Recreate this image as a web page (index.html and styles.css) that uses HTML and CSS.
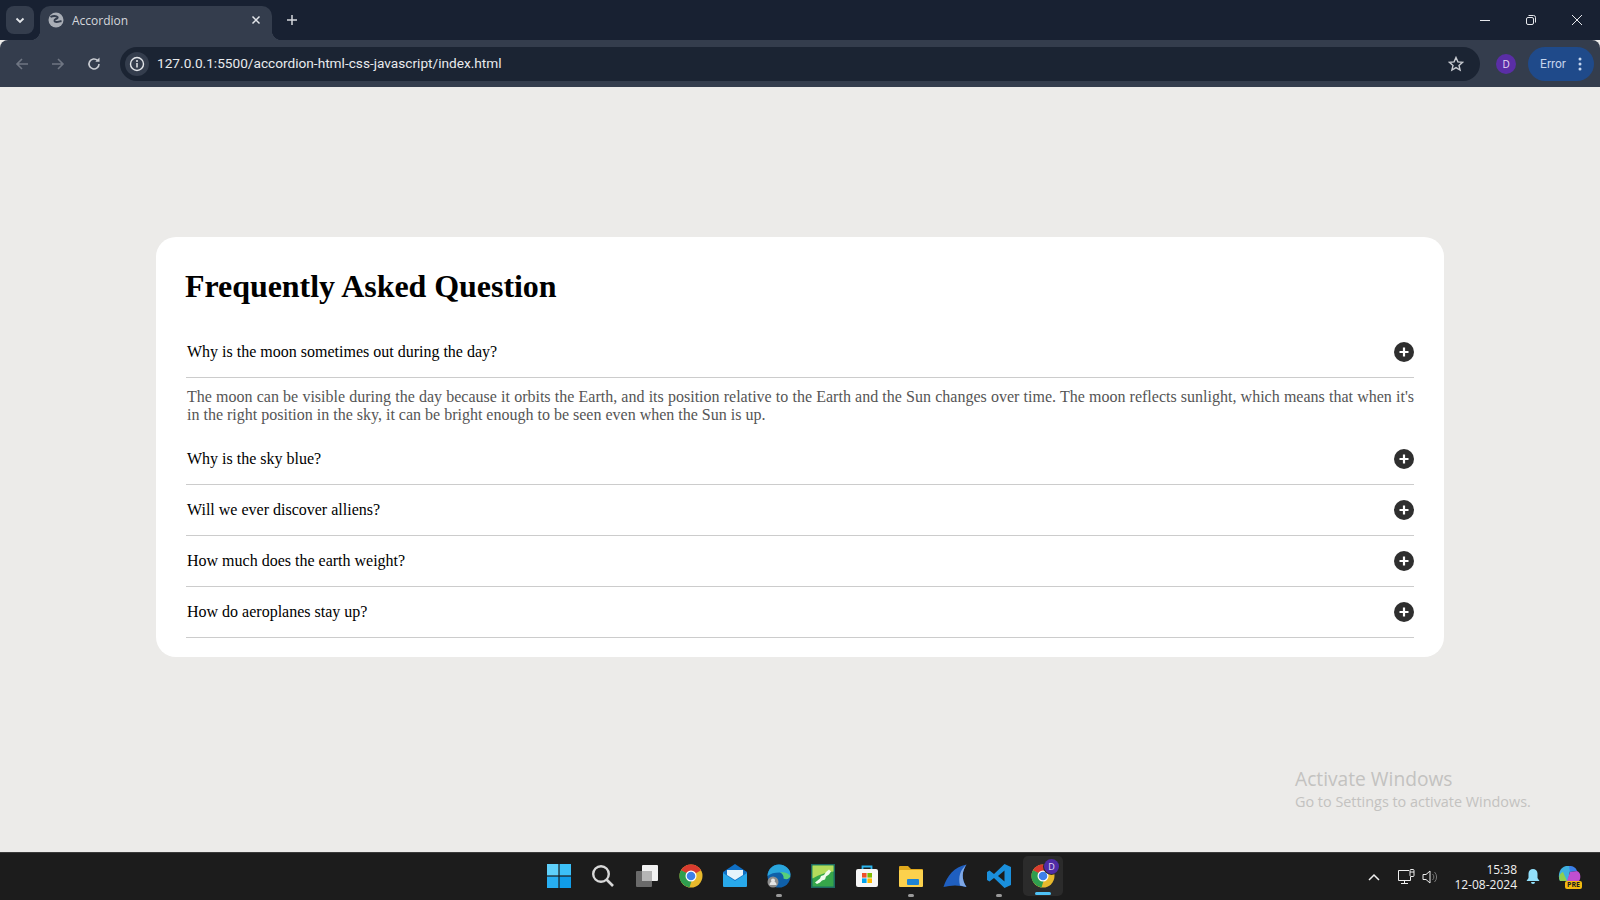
FILE: index.html
```html
<!DOCTYPE html>
<html lang="en">
<head>
    <meta charset="UTF-8">
    <title>Accordion</title>
    <link rel="stylesheet" href="styles.css">
</head>
<body>
    <div class="tabstrip">
        <div class="tab-search">
            <svg width="12" height="12" viewBox="0 0 12 12"><path d="M2.500 4.500 6 8l3.500-3.500" fill="none" stroke="#e3e6ea" stroke-width="1.800"/></svg>
        </div>
        <div class="tab">
            <svg class="globe" width="16" height="16" viewBox="0 0 16 16">
                <circle cx="8" cy="8" r="7.500" fill="#a9aeb6"/>
                <path d="M2.500 5C5 3.500 8.500 3.500 9.500 5 10.500 7 6 6.500 6.500 9 7 11 11 9.500 13.500 9" fill="none" stroke="#343d4d" stroke-width="2"/>
            </svg>
            <span class="tab-title">Accordion</span>
            <svg class="tab-close" width="10" height="10" viewBox="0 0 10 10"><path d="M1.500 1.500l7 7M8.500 1.500l-7 7" stroke="#e3e6ea" stroke-width="1.500"/></svg>
        </div>
        <svg class="new-tab" width="12" height="12" viewBox="0 0 12 12"><path d="M6 1v10M1 6h10" stroke="#d5d8dd" stroke-width="1.500"/></svg>
        <div class="window-buttons">
            <svg width="12" height="12" viewBox="0 0 12 12"><path d="M1 6.500h10" stroke="#e6e8ec" stroke-width="1"/></svg>
            <svg width="12" height="12" viewBox="0 0 12 12"><rect x="1.500" y="3.500" width="7" height="7" rx="1.500" fill="none" stroke="#e6e8ec"/><path d="M3.500 1.500h5a2 2 0 0 1 2 2v5" fill="none" stroke="#e6e8ec"/></svg>
            <svg width="12" height="12" viewBox="0 0 12 12"><path d="M1 1l10 10M11 1 1 11" stroke="#e6e8ec" stroke-width="1"/></svg>
        </div>
    </div>

    <div class="toolbar">
        <div class="nav-buttons">
            <svg width="16" height="16" viewBox="0 0 16 16"><path d="M14 8H3M8 3 3 8l5 5" fill="none" stroke="#6f7683" stroke-width="1.600"/></svg>
            <svg width="16" height="16" viewBox="0 0 16 16"><path d="M2 8h11M8 3l5 5-5 5" fill="none" stroke="#6f7683" stroke-width="1.600"/></svg>
            <svg width="16" height="16" viewBox="0 0 16 16"><path d="M13 8a5 5 0 1 1-1.500-3.600" fill="none" stroke="#c9ccd2" stroke-width="1.600"/><path d="M13.500 1.500v4.200H9.300z" fill="#c9ccd2"/></svg>
        </div>
        <div class="omnibox">
            <div class="site-info">
                <svg width="16" height="16" viewBox="0 0 16 16"><circle cx="8" cy="8" r="6.500" fill="none" stroke="#e3e6ea" stroke-width="1.400"/><path d="M8 7v4.500" stroke="#e3e6ea" stroke-width="1.500"/><circle cx="8" cy="4.900" r="1" fill="#e3e6ea"/></svg>
            </div>
            <span class="url">127.0.0.1:5500/accordion-html-css-javascript/index.html</span>
            <svg class="star" width="16" height="16" viewBox="0 0 16 16"><path d="M8 1.500l1.900 4.400 4.700.4-3.600 3.100 1.100 4.700L8 11.600l-4.100 2.500L5 9.400 1.400 6.300l4.700-.4z" fill="none" stroke="#c9ccd2" stroke-width="1.400"/></svg>
        </div>
        <div class="avatar">D</div>
        <div class="error-pill">
            <span>Error</span>
            <svg width="4" height="14" viewBox="0 0 4 14"><circle cx="2" cy="2" r="1.500" fill="#c5d5ee"/><circle cx="2" cy="7" r="1.500" fill="#c5d5ee"/><circle cx="2" cy="12" r="1.500" fill="#c5d5ee"/></svg>
        </div>
    </div>

    <main class="page">
        <div class="card">
            <h1>Frequently Asked Question</h1>

            <div class="faq-item">
                <div class="question">
                    <span>Why is the moon sometimes out during the day?</span>
                    <svg class="plus" width="20" height="20" viewBox="0 0 20 20"><circle cx="10" cy="10" r="10" fill="#2f2f2f"/><path d="M10 5.500v9M5.500 10h9" stroke="#fff" stroke-width="2.200"/></svg>
                </div>
                <p class="answer">The moon can be visible during the day because it orbits the Earth, and its position relative to the Earth and the Sun changes over time. The moon reflects sunlight, which means that when it's in the right position in the sky, it can be bright enough to be seen even when the Sun is up.</p>
            </div>
            <div class="faq-item">
                <div class="question">
                    <span>Why is the sky blue?</span>
                    <svg class="plus" width="20" height="20" viewBox="0 0 20 20"><circle cx="10" cy="10" r="10" fill="#2f2f2f"/><path d="M10 5.500v9M5.500 10h9" stroke="#fff" stroke-width="2.200"/></svg>
                </div>
            </div>
            <div class="faq-item">
                <div class="question">
                    <span>Will we ever discover alliens?</span>
                    <svg class="plus" width="20" height="20" viewBox="0 0 20 20"><circle cx="10" cy="10" r="10" fill="#2f2f2f"/><path d="M10 5.500v9M5.500 10h9" stroke="#fff" stroke-width="2.200"/></svg>
                </div>
            </div>
            <div class="faq-item">
                <div class="question">
                    <span>How much does the earth weight?</span>
                    <svg class="plus" width="20" height="20" viewBox="0 0 20 20"><circle cx="10" cy="10" r="10" fill="#2f2f2f"/><path d="M10 5.500v9M5.500 10h9" stroke="#fff" stroke-width="2.200"/></svg>
                </div>
            </div>
            <div class="faq-item">
                <div class="question">
                    <span>How do aeroplanes stay up?</span>
                    <svg class="plus" width="20" height="20" viewBox="0 0 20 20"><circle cx="10" cy="10" r="10" fill="#2f2f2f"/><path d="M10 5.500v9M5.500 10h9" stroke="#fff" stroke-width="2.200"/></svg>
                </div>
            </div>
        </div>

        <div class="watermark">
            <div class="watermark-title">Activate Windows</div>
            <div>Go to Settings to activate Windows.</div>
        </div>
    </main>

    <footer class="taskbar">
        <div class="task-icons">
            <div class="task-icon">
                <svg width="24" height="24" viewBox="0 0 24 24"><rect width="11.400" height="11.400" fill="#5fd0fb"/><rect x="12.600" width="11.400" height="11.400" fill="#3cc0f8"/><rect y="12.600" width="11.400" height="11.400" fill="#27aef2"/><rect x="12.600" y="12.600" width="11.400" height="11.400" fill="#109ce8"/></svg>
            </div>
            <div class="task-icon">
                <svg width="24" height="24" viewBox="0 0 24 24"><circle cx="10" cy="10" r="7.800" fill="none" stroke="#d8d8d8" stroke-width="2.400"/><path d="M15.500 15.500 22 22" stroke="#d8d8d8" stroke-width="2.600"/></svg>
            </div>
            <div class="task-icon">
                <svg width="24" height="24" viewBox="0 0 24 24"><rect x="7" y="1" width="16" height="16" rx="1" fill="#f2f2f2"/><rect x="1" y="7" width="16" height="16" rx="1" fill="#6a6a6a"/><rect x="7" y="7" width="10" height="10" fill="#b5b5b5"/></svg>
            </div>
            <div class="task-icon">
                <svg width="24" height="24" viewBox="0 0 24 24">
                    <circle cx="12" cy="12" r="11.500" fill="#e8b92c"/>
                    <path d="M12 12 2 6.200A11.500 11.500 0 0 1 22 6.200Z" fill="#d93b2f"/>
                    <path d="M2 6.200A11.500 11.500 0 0 0 10.500 23.400L14 12Z" fill="#2f9e4f"/>
                    <circle cx="12" cy="12" r="5.500" fill="#fff"/><circle cx="12" cy="12" r="4.300" fill="#3d80ea"/>
                </svg>
            </div>
            <div class="task-icon">
                <svg width="24" height="24" viewBox="0 0 24 24"><path d="M0 8 12 0l12 8v14H0z" fill="#0f6fc4"/><path d="M0 9l12 8 12-8v13a1 1 0 0 1-1 1H1a1 1 0 0 1-1-1z" fill="#28a8ea"/><path d="M4 6h16v5l-8 5-8-5z" fill="#e6f3fb"/></svg>
            </div>
            <div class="task-icon has-dot">
                <svg width="24" height="24" viewBox="0 0 24 24">
                    <circle cx="12" cy="12" r="11.500" fill="#0f5fa8"/>
                    <path d="M.5 12C1 5 6 .5 12 .5c6 0 11.500 4.500 11.500 10 0 3-3 5-6 4 1-3-1-6-5-6-5 0-9 1-12 3.500Z" fill="#2aa6dc"/>
                    <path d="M13 8.500c4-1 8.500 1 10.500 3.500-1 3-4 4-7 2.500.5-2.500-1-5-3.500-6Z" fill="#58cf7a"/>
                    <circle cx="6" cy="18" r="5.500" fill="#8d8d8d"/><circle cx="6" cy="16.500" r="2" fill="#e5e5e5"/><path d="M2.500 21a3.500 3.500 0 0 1 7 0z" fill="#e5e5e5"/>
                </svg>
                <i class="run-dot"></i>
            </div>
            <div class="task-icon">
                <svg width="24" height="24" viewBox="0 0 24 24"><rect width="24" height="24" fill="#1d6a63"/><rect x="1.500" y="1.500" width="21" height="21" fill="#36a64a"/><path d="M1.500 14.500V1.500h21v6c-7 .5-14 3-21 7Z" fill="#b3dc5c"/><path d="M4 18.500 9 14.500l1-2.500 3-1 2-3 3-2.500 2 2-2 3-3 2-1 3-3 1-2 2-3 1.500Z" fill="#f2fbee"/></svg>
            </div>
            <div class="task-icon">
                <svg width="24" height="24" viewBox="0 0 24 24"><path d="M7.500 5V2.500h9V5" fill="none" stroke="#2ab5ef" stroke-width="1.800"/><rect x="1" y="5" width="22" height="18" rx="2" fill="#f6f6f6"/><rect x="7" y="9" width="4.600" height="4.600" fill="#ee4f2a"/><rect x="12.400" y="9" width="4.600" height="4.600" fill="#7fba00"/><rect x="7" y="14.400" width="4.600" height="4.600" fill="#00a4ef"/><rect x="12.400" y="14.400" width="4.600" height="4.600" fill="#ffb900"/></svg>
            </div>
            <div class="task-icon has-dot">
                <svg width="24" height="24" viewBox="0 0 24 24"><path d="M0 3a1 1 0 0 1 1-1h8l3 3h11a1 1 0 0 1 1 1v4H0z" fill="#e0a91c"/><rect y="6" width="24" height="17" rx="1" fill="#fcd14d"/><rect x="8" y="15" width="12" height="6" rx="1" fill="#1d83d4"/></svg>
                <i class="run-dot"></i>
            </div>
            <div class="task-icon">
                <svg width="24" height="24" viewBox="0 0 24 24"><path d="M.5 23C4 12 11 3 23.500 .5 19 7 18 15 23.500 23 16 21 8 21 .5 23Z" fill="#1f5fc0"/><path d="M23.500 .5C17 6 15 13 17 21.500l6.500 1.500C18 15 19 7 23.500 .5Z" fill="#7fa8e6"/></svg>
            </div>
            <div class="task-icon has-dot">
                <svg width="24" height="24" viewBox="0 0 24 24"><path d="M17.500 0 24 3v18l-6.500 3L7 14l-4.500 3.500L0 16V8l2.500-1.500L7 10Z" fill="#1a8fdc"/><path d="M17.500 6.500 11 12l6.500 5.500Z" fill="#1c1c1c"/></svg>
                <i class="run-dot"></i>
            </div>
            <div class="task-icon active">
                <svg width="24" height="24" viewBox="0 0 24 24">
                    <circle cx="12" cy="12" r="11.500" fill="#e8b92c"/>
                    <path d="M12 12 2 6.200A11.500 11.500 0 0 1 22 6.200Z" fill="#d93b2f"/>
                    <path d="M2 6.200A11.500 11.500 0 0 0 10.500 23.400L14 12Z" fill="#2f9e4f"/>
                    <circle cx="12" cy="12" r="5.500" fill="#fff"/><circle cx="12" cy="12" r="4.300" fill="#3d80ea"/>
                </svg>
                <span class="task-badge">D</span>
                <i class="run-bar"></i>
            </div>
        </div>

        <div class="tray">
            <svg class="tray-chevron" width="14" height="14" viewBox="0 0 14 14"><path d="M2 10l5-5 5 5" fill="none" stroke="#f0f0f0" stroke-width="1.500"/></svg>
            <svg class="tray-net" width="17" height="16" viewBox="0 0 17 16"><path d="M11 1.500H.5v10h12V8" fill="none" stroke="#ededed"/><path d="M6.500 11.500v3M3 14.500h7" stroke="#ededed"/><rect x="12" y=".5" width="4" height="7" rx="1" fill="none" stroke="#ededed"/><path d="M12 3h4" stroke="#ededed"/></svg>
            <svg class="tray-sound" width="17" height="16" viewBox="0 0 17 16"><path d="M1 5.500h3L8 2v12l-4-3.500H1z" fill="none" stroke="#ededed"/><path d="M10.500 5a4 4 0 0 1 0 6M12.500 3a7 7 0 0 1 0 10" fill="none" stroke="#777"/></svg>
            <div class="clock">
                <div>15:38</div>
                <div>12-08-2024</div>
            </div>
            <svg class="bell" width="14" height="16" viewBox="0 0 14 16"><path d="M7 0a4.500 4.500 0 0 1 4.500 4.500V9l2 3H.5l2-3V4.500A4.500 4.500 0 0 1 7 0ZM5 13h4a2 2 0 0 1-4 0Z" fill="#92e0fb"/></svg>
            <div class="copilot">
                <svg width="24" height="20" viewBox="0 0 24 20"><path d="M3 16C0 10 3 2 9 1h5l-3 15Z" fill="#3fb0e0"/><path d="M3 16C1 12 3 8 6 7l4 9Z" fill="#8fcf4f"/><path d="M12 1c5 0 7 2 8 5l-7 1Z" fill="#3b7fe8"/><path d="M13 7l7-1c4 1 4 8 2 10H10Z" fill="#c04fd0"/></svg>
                <span class="pre-tag">PRE</span>
            </div>
        </div>
    </footer>
</body>
</html>
```

FILE: styles.css
```css
* {
    box-sizing: border-box;
}
body {
    margin: 0;
    display: flex;
    flex-direction: column;
    height: 900px;
    overflow: hidden;
    font-family: "Liberation Serif", "Times New Roman", serif;
    background-color: #ecebe9;
}

/* browser chrome */
.tabstrip {
    height: 40px;
    flex: none;
    display: flex;
    align-items: flex-start;
    padding: 6px 0 0 6px;
    background-color: #182132;
}
.tab-search {
    width: 28px;
    height: 28px;
    display: flex;
    align-items: center;
    justify-content: center;
    border-radius: 8px;
    background-color: #343d4d;
}
.tab {
    position: relative;
    width: 232px;
    height: 34px;
    margin-left: 6px;
    padding: 0 11px 6px 8px;
    display: flex;
    align-items: center;
    border-radius: 10px 10px 0 0;
    background-color: #343d4d;
}
.tab::before,
.tab::after {
    content: "";
    position: absolute;
    bottom: 0;
    width: 10px;
    height: 10px;
}
.tab::before {
    left: -10px;
    background: radial-gradient(circle at 0 0, transparent 10px, #343d4d 10.5px);
}
.tab::after {
    right: -10px;
    background: radial-gradient(circle at 100% 0, transparent 10px, #343d4d 10.5px);
}
.globe {
    margin-right: 8px;
}
.tab-title {
    flex: 1;
    font: 12px "Open Sans", sans-serif;
    color: #d4d7dc;
}
.new-tab {
    margin: 8px 0 0 14px;
}
.window-buttons {
    margin-left: auto;
    padding: 8px 17px 0 0;
    display: flex;
    gap: 34px;
}
.toolbar {
    height: 47px;
    flex: none;
    display: flex;
    align-items: center;
    padding: 0 6px 0 14px;
    background-color: #343d4d;
    border-radius: 8px 8px 0 0;
}
.nav-buttons {
    display: flex;
    gap: 20px;
}
.omnibox {
    width: 1362px;
    height: 34px;
    margin-left: 18px;
    padding: 0 16px 0 5px;
    display: flex;
    align-items: center;
    border-radius: 17px;
    background-color: #1b2433;
}
.site-info {
    width: 24px;
    height: 24px;
    display: flex;
    align-items: center;
    justify-content: center;
    border-radius: 50%;
    background-color: #343d4d;
}
.url {
    flex: 1;
    margin-left: 8px;
    padding-bottom: 1px;
    font: 13.67px Roboto, sans-serif;
    color: #e8eaed;
}
.avatar {
    width: 20px;
    height: 20px;
    margin-left: 16px;
    border-radius: 50%;
    background-color: #5a2ea6;
    color: #e6dcf7;
    font: 10px/20px "Open Sans", sans-serif;
    text-align: center;
}
.error-pill {
    width: 66px;
    height: 34px;
    margin-left: 12px;
    padding: 0 12px;
    display: flex;
    align-items: center;
    justify-content: space-between;
    border-radius: 17px;
    background-color: #1f4a8a;
    color: #c5d5ee;
    font: 12px Roboto, sans-serif;
}

/* page */
.page {
    position: relative;
    flex: 1;
    padding: 150px 156px 0;
}
.card {
    height: 420px;
    padding: 31px 30px 0 29px;
    border-radius: 20px;
    background-color: #fff;
}
h1 {
    margin: 0 0 22px;
    font-size: 32px;
    line-height: 37px;
    letter-spacing: -0.05px;
    color: #000;
}
.faq-item {
    margin-left: 1px;
}
.question {
    height: 51px;
    padding-left: 1px;
    display: flex;
    align-items: center;
    justify-content: space-between;
    border-bottom: 1px solid #ccc;
    font-size: 16px;
    color: #000;
}
.plus {
    margin-right: 0.5px;
}
.answer {
    margin: 10px 0 10px;
    padding-left: 1px;
    font-size: 16px;
    line-height: 18px;
    text-align: justify;
    color: #555;
}
.watermark {
    position: absolute;
    left: 1295px;
    top: 679px;
    font: 14.4px "Open Sans", sans-serif;
    color: #c3c2c0;
}
.watermark-title {
    font-size: 19.2px;
    line-height: 26px;
}

/* windows taskbar */
.taskbar {
    position: relative;
    height: 48px;
    flex: none;
    display: flex;
    align-items: center;
    justify-content: center;
    border-top: 1px solid #3a3a3a;
    background-color: #1c1c1c;
}
.task-icons {
    display: flex;
    margin: 0 0 2px 2px;
}
.task-icon {
    position: relative;
    width: 44px;
    height: 40px;
    display: flex;
    align-items: center;
    justify-content: center;
}
.task-icon.active {
    width: 40px;
    margin: 0 2px;
    border-radius: 5px;
    background-color: #2b2b2b;
}
.run-dot {
    position: absolute;
    bottom: -1px;
    left: 19px;
    width: 6px;
    height: 3px;
    border-radius: 2px;
    background-color: #9a9a9a;
}
.run-bar {
    position: absolute;
    bottom: 1px;
    left: 12px;
    width: 16px;
    height: 3px;
    border-radius: 2px;
    background-color: #4fc3f7;
}
.task-badge {
    position: absolute;
    top: 3px;
    right: 4px;
    width: 15px;
    height: 15px;
    border-radius: 50%;
    background-color: #4f2ca6;
    box-shadow: 0 0 0 1px #2b2b2b;
    color: #e6dcf7;
    font: 9px/15px "Open Sans", sans-serif;
    text-align: center;
}
.tray {
    position: absolute;
    right: 0;
    top: 0;
    height: 47px;
    padding-right: 19px;
    display: flex;
    align-items: center;
}
.tray-net {
    margin-left: 17px;
}
.tray-sound {
    margin-left: 7px;
}
.clock {
    width: 66px;
    margin-left: 12px;
    font: 12px/15px "Open Sans", sans-serif;
    text-align: right;
    white-space: nowrap;
    color: #f2f2f2;
}
.bell {
    margin-left: 9px;
}
.copilot {
    position: relative;
    width: 24px;
    height: 24px;
    margin-left: 17px;
}
.pre-tag {
    position: absolute;
    right: -1px;
    bottom: 0;
    padding: 0 2px;
    border-radius: 2px;
    background-color: #f2b90f;
    color: #1c1c1c;
    font: bold 7px/8px "Open Sans", sans-serif;
}
```
